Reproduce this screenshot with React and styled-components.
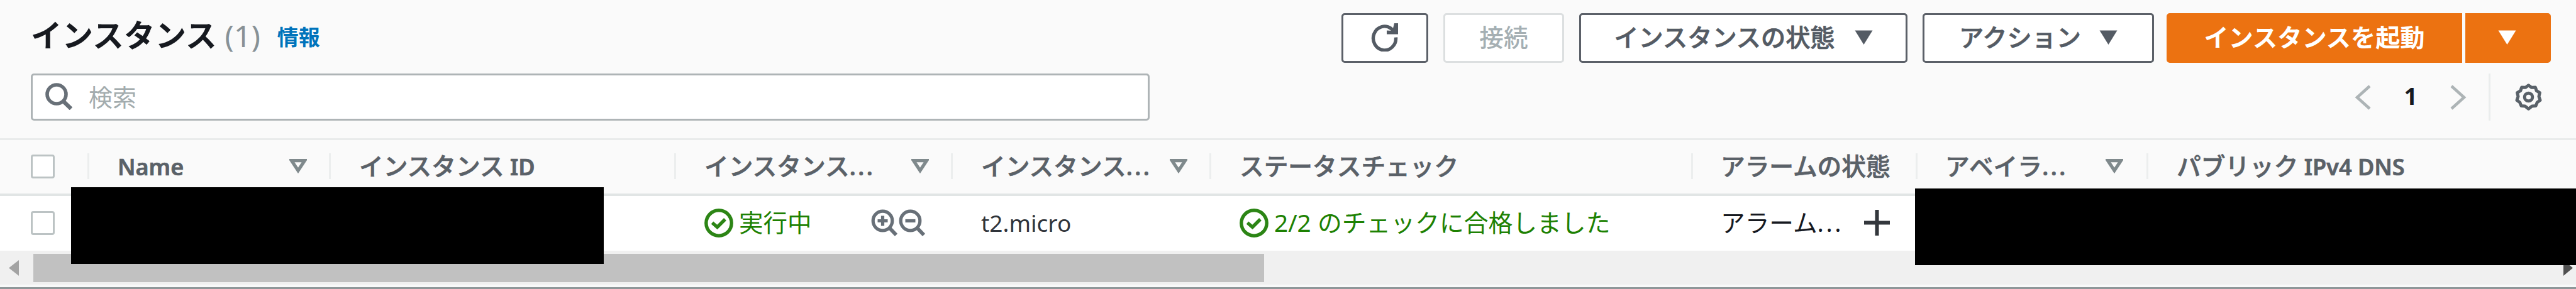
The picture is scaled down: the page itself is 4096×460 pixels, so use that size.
import React from "react";
import styled, { createGlobalStyle } from "styled-components";

const GlobalStyle = createGlobalStyle`
  * { box-sizing: border-box; }
  html, body { margin: 0; padding: 0; background: #fafafa; overflow: hidden; }
  body { font-family: "Noto Sans", "Noto Sans CJK JP", sans-serif; }
`;

const Panel = styled.main`
  position: relative;
  width: 4096px;
  height: 460px;
  display: flex;
  flex-direction: column;
  background: #fafafa;
  color: #16191f;
  overflow: hidden;
`;

const Label = styled.span`
  font-family: "Noto Sans", "Noto Sans CJK JP", sans-serif;
  font-size: ${(p) => p.$size || 38.7}px;
  font-weight: ${(p) => p.$weight || 400};
  color: ${(p) => p.$color || "inherit"};
  line-height: 1;
  white-space: pre;
`;

const StrongLabel = styled(Label)`
  font-weight: 500;
  -webkit-text-stroke: 0.7px currentColor;
`;

const Latin = styled.span`
  font-size: 36px;
  font-weight: 600;
`;

const Dots = styled.span`
  letter-spacing: ${(p) => p.$track || 3}px;
`;

const TopBar = styled.header`
  height: 117px;
  flex: none;
  display: flex;
  justify-content: space-between;
  align-items: flex-start;
  padding: 21px 40px 0 49px;
`;

const Heading = styled.h1`
  margin: 0;
  height: 71px;
  display: flex;
  align-items: center;
`;

const Count = styled(Label)`
  margin-left: 13px;
  color: #879196;
`;

const InfoLink = styled.a`
  margin: 4px 0 0 27px;
  display: flex;
  color: #0073bb;
`;

const Actions = styled.div`
  display: flex;
  height: 79px;
`;

const Button = styled.button`
  width: ${(p) => p.$width}px;
  height: 79px;
  margin: 0 0 0 ${(p) => p.$gap || 0}px;
  padding: 0 ${(p) => p.$shift || 0}px 3px 0;
  display: flex;
  align-items: center;
  justify-content: center;
  gap: ${(p) => p.$inner || 0}px;
  border: 3.5px solid ${(p) => (p.$tone === "primary" ? "#ec7211" : p.$tone === "off" ? "#dcdfe0" : "#5b6068")};
  border-radius: ${(p) => p.$radius || "5px"};
  background: ${(p) => (p.$tone === "primary" ? "#ec7211" : "#fff")};
  color: ${(p) => (p.$tone === "primary" ? "#fff" : p.$tone === "off" ? "#a5afb3" : "#545b64")};
`;

const FilterBar = styled.div`
  height: 103px;
  flex: none;
  display: flex;
  justify-content: space-between;
  padding: 0 53px 0 49px;
`;

const SearchBox = styled.div`
  width: 1779px;
  height: 75px;
  display: flex;
  align-items: center;
  gap: 25px;
  padding: 0 0 2px 19px;
  border: 3px solid #aeb4b6;
  border-radius: 5px;
  background: #fff;
`;

const Pager = styled.div`
  height: 75px;
  display: flex;
  align-items: center;
`;

const PageNumber = styled.div`
  width: 126px;
  display: flex;
  justify-content: center;
  padding-bottom: 5px;
`;

const PagerDivider = styled.div`
  width: 3px;
  height: 75px;
  margin: 0 38px 0 35px;
  background: #eaeded;
`;

const HeaderRow = styled.div`
  height: 92px;
  flex: none;
  display: flex;
  border-top: 3px solid #e9ebeb;
  border-bottom: 4px solid #e1e5e5;
`;

const BodyRow = styled.div`
  height: 87px;
  flex: none;
  display: flex;
  background: #fff;
`;

const Cell = styled.div`
  position: relative;
  flex: none;
  width: ${(p) => p.$width}px;
  display: flex;
  align-items: center;
  padding-left: ${(p) => (p.$pad === undefined ? 46 : p.$pad)}px;
  padding-bottom: 2px;
`;

const HeadCell = styled(Cell)`
  justify-content: space-between;
  padding-right: ${(p) => p.$right || 37}px;
  padding-bottom: 2px;
  &::after {
    content: "";
    position: absolute;
    right: -1px;
    top: 21px;
    width: ${(p) => (p.$last ? 0 : 3)}px;
    height: 41px;
    background: #eceeee;
  }
`;

const Checkbox = styled.div`
  width: 38px;
  height: 38px;
  border: 3px solid #bcc3c4;
  border-radius: 4px;
  background: #fff;
`;

const Status = styled.div`
  display: flex;
  align-items: center;
  gap: 9px;
  color: #1d8102;
`;

const IconPair = styled.div`
  display: flex;
  gap: 1px;
  margin-left: 94px;
`;

const PlusSlot = styled.div`
  display: flex;
  margin-left: 33px;
`;

const ScrollTrack = styled.div`
  height: 58px;
  flex: none;
  display: flex;
  align-items: center;
  padding-left: 14px;
  background: #f0f0f0;
  border-bottom: 4px solid #f8f9f9;
`;

const ScrollArrow = styled.div`
  display: flex;
  width: 39px;
`;

const ScrollThumb = styled.div`
  width: 1957px;
  height: 45px;
  margin-right: auto;
  background: #c1c1c1;
`;

const BottomEdge = styled.div`
  flex: 1;
  background: #8f9799;
`;

const Redaction = styled.div`
  position: absolute;
  left: ${(p) => p.$left}px;
  top: ${(p) => p.$top}px;
  width: ${(p) => p.$width}px;
  height: 122px;
  background: #000;
`;

const Caret = () => (
  <svg width="29" height="23" viewBox="0 0 29 23">
    <path d="M0.5 0.5H28.5L14.5 23Z" fill="currentColor" />
  </svg>
);

const SortIcon = () => (
  <svg width="28" height="23" viewBox="0 0 28 23">
    <path d="M3.6 2.7H24.4L14 18.5Z" fill="none" stroke="#7f898c" strokeWidth="5.2" />
  </svg>
);

const SearchIcon = () => (
  <svg width="45" height="43" viewBox="0 0 45 43">
    <ellipse cx="19" cy="18" rx="15" ry="15" fill="none" stroke="#687078" strokeWidth="5.6" />
    <path d="M29.5 29L42 41" stroke="#687078" strokeWidth="6.5" />
  </svg>
);

const RefreshIcon = () => (
  <svg width="46" height="46" viewBox="0 0 46 46">
    <path d="M40.5 23.5A18 19 0 1 1 33 9.5L39 15" fill="none" stroke="#545b64" strokeWidth="5.4" />
    <path d="M44 1V18.5H26V12.5L35 13L38 1Z" fill="#545b64" />
  </svg>
);

const GearIcon = () => (
  <svg width="45" height="43" viewBox="0 0 45 43">
    <path
      d="M22.5 2.8 L27.3 6.3 L33.4 6 L35.2 11.4 L40.4 14.6 L39 20.5 L41 26.5 L36.3 30 L34 35.6 L28 36 L22.5 40.2 L17 36 L11 35.6 L8.7 30 L4 26.5 L6 20.5 L4.6 14.6 L9.8 11.4 L11.6 6 L17.7 6.3Z"
      fill="none" stroke="#596169" strokeWidth="5" strokeLinejoin="round"
    />
    <circle cx="22.5" cy="21.5" r="6.3" fill="none" stroke="#596169" strokeWidth="5" />
  </svg>
);

const CheckIcon = () => (
  <svg width="46" height="46" viewBox="0 0 46 46">
    <circle cx="23" cy="23" r="20.2" fill="none" stroke="#2c8515" strokeWidth="5.4" />
    <path d="M12.5 22.5L20.5 29.5L33 17" fill="none" stroke="#2c8515" strokeWidth="5.4" />
  </svg>
);

const ZoomIcon = ({ plus }) => (
  <svg width="43" height="43" viewBox="0 0 43 43">
    <circle cx="18.5" cy="18.5" r="15.3" fill="none" stroke="#687078" strokeWidth="5.2" />
    <path d="M29.5 30L40 41" stroke="#687078" strokeWidth="5.8" />
    <path d={plus ? "M10.5 18.5H26.5M18.5 10.5V26.5" : "M10.5 18.5H26.5"} stroke="#687078" strokeWidth="5.2" />
  </svg>
);

const PlusIcon = () => (
  <svg width="41" height="41" viewBox="0 0 41 41">
    <path d="M0 20.5H41M20.5 0V41" stroke="#33373c" strokeWidth="6" />
  </svg>
);

const Chevron = ({ flip }) => (
  <svg width="26" height="40" viewBox="0 0 26 40">
    <path d={flip ? "M2 2L22 20L2 38" : "M24 2L4 20L24 38"} fill="none" stroke="#adb4b6" strokeWidth="4.6" />
  </svg>
);

const columns = [
  { width: 384, title: <Latin>Name</Latin>, sort: true },
  { width: 549, title: <>インスタンス<Latin> ID</Latin></> },
  { width: 440, title: <>インスタンス<Dots>...</Dots></>, sort: true },
  { width: 411, title: <>インスタンス<Dots>...</Dots></>, sort: true },
  { width: 766, title: "ステータスチェック" },
  { width: 357, title: "アラームの状態", pad: 45 },
  { width: 367, title: <>アベイラ<Dots>...</Dots></>, sort: true, right: 39, pad: 45 },
  { width: 681, title: <>パブリック<Latin> IPv4 DNS</Latin></>, last: true },
];

export default function App() {
  return (
    <>
      <GlobalStyle />
      <Panel>
        <TopBar>
          <Heading>
            <Label $size={49.6} $weight={700}>インスタンス</Label>
            <Count $size={48}>(1)</Count>
            <InfoLink><Label $size={34} $weight={700}>情報</Label></InfoLink>
          </Heading>
          <Actions>
            <Button $width={138}><RefreshIcon /></Button>
            <Button $width={192} $gap={24} $tone="off"><Label $weight={500}>接続</Label></Button>
            <Button $width={522} $gap={24} $inner={31}>
              <StrongLabel $size={39.2}>インスタンスの状態</StrongLabel><Caret />
            </Button>
            <Button $width={368} $gap={24} $inner={29}>
              <StrongLabel $size={39.2}>アクション</StrongLabel><Caret />
            </Button>
            <Button $width={470} $gap={20} $tone="primary" $radius="5px 0 0 5px">
              <Label $size={39.2} $weight={700}>インスタンスを起動</Label>
            </Button>
            <Button $width={136} $gap={5} $shift={4} $tone="primary" $radius="0 5px 5px 0"><Caret /></Button>
          </Actions>
        </TopBar>

        <FilterBar>
          <SearchBox>
            <SearchIcon />
            <Label $size={38} $color="#a3acae">検索</Label>
          </SearchBox>
          <Pager>
            <Chevron />
            <PageNumber><Label $size={37} $weight={700}>1</Label></PageNumber>
            <Chevron flip />
            <PagerDivider />
            <GearIcon />
          </Pager>
        </FilterBar>

        <HeaderRow>
          <HeadCell $width={141} $pad={49}><Checkbox /></HeadCell>
          {columns.map((c, i) => (
            <HeadCell key={i} $width={c.width} $pad={c.pad} $right={c.right} $last={c.last}>
              <StrongLabel $color="#5a6168">{c.title}</StrongLabel>
              {c.sort && <SortIcon />}
            </HeadCell>
          ))}
        </HeaderRow>

        <BodyRow>
          <Cell $width={1074} $pad={49}><Checkbox /></Cell>
          <Cell $width={440}>
            <Status><CheckIcon /><Label $size={38.5}>実行中</Label></Status>
            <IconPair><ZoomIcon plus /><ZoomIcon /></IconPair>
          </Cell>
          <Cell $width={411}><Label $size={37} $color="#30343a">t2.micro</Label></Cell>
          <Cell $width={766}>
            <Status><CheckIcon /><Label $size={38.8}>2/2 のチェックに合格しました</Label></Status>
          </Cell>
          <Cell $width={357} $pad={45}>
            <Label>アラーム<Dots $track={3.5}>...</Dots></Label>
            <PlusSlot><PlusIcon /></PlusSlot>
          </Cell>
        </BodyRow>

        <ScrollTrack>
          <ScrollArrow>
            <svg width="16" height="25" viewBox="0 0 16 25"><path d="M16 0V25L0 12.5Z" fill="#a3a3a3" /></svg>
          </ScrollArrow>
          <ScrollThumb />
          <svg width="20" height="25" viewBox="0 0 20 25"><path d="M0 0V25L15 12.5Z" fill="#505050" /></svg>
        </ScrollTrack>
        <BottomEdge />

        <Redaction $left={113} $top={298} $width={847} />
        <Redaction $left={3045} $top={300} $width={1051} />
      </Panel>
    </>
  );
}
